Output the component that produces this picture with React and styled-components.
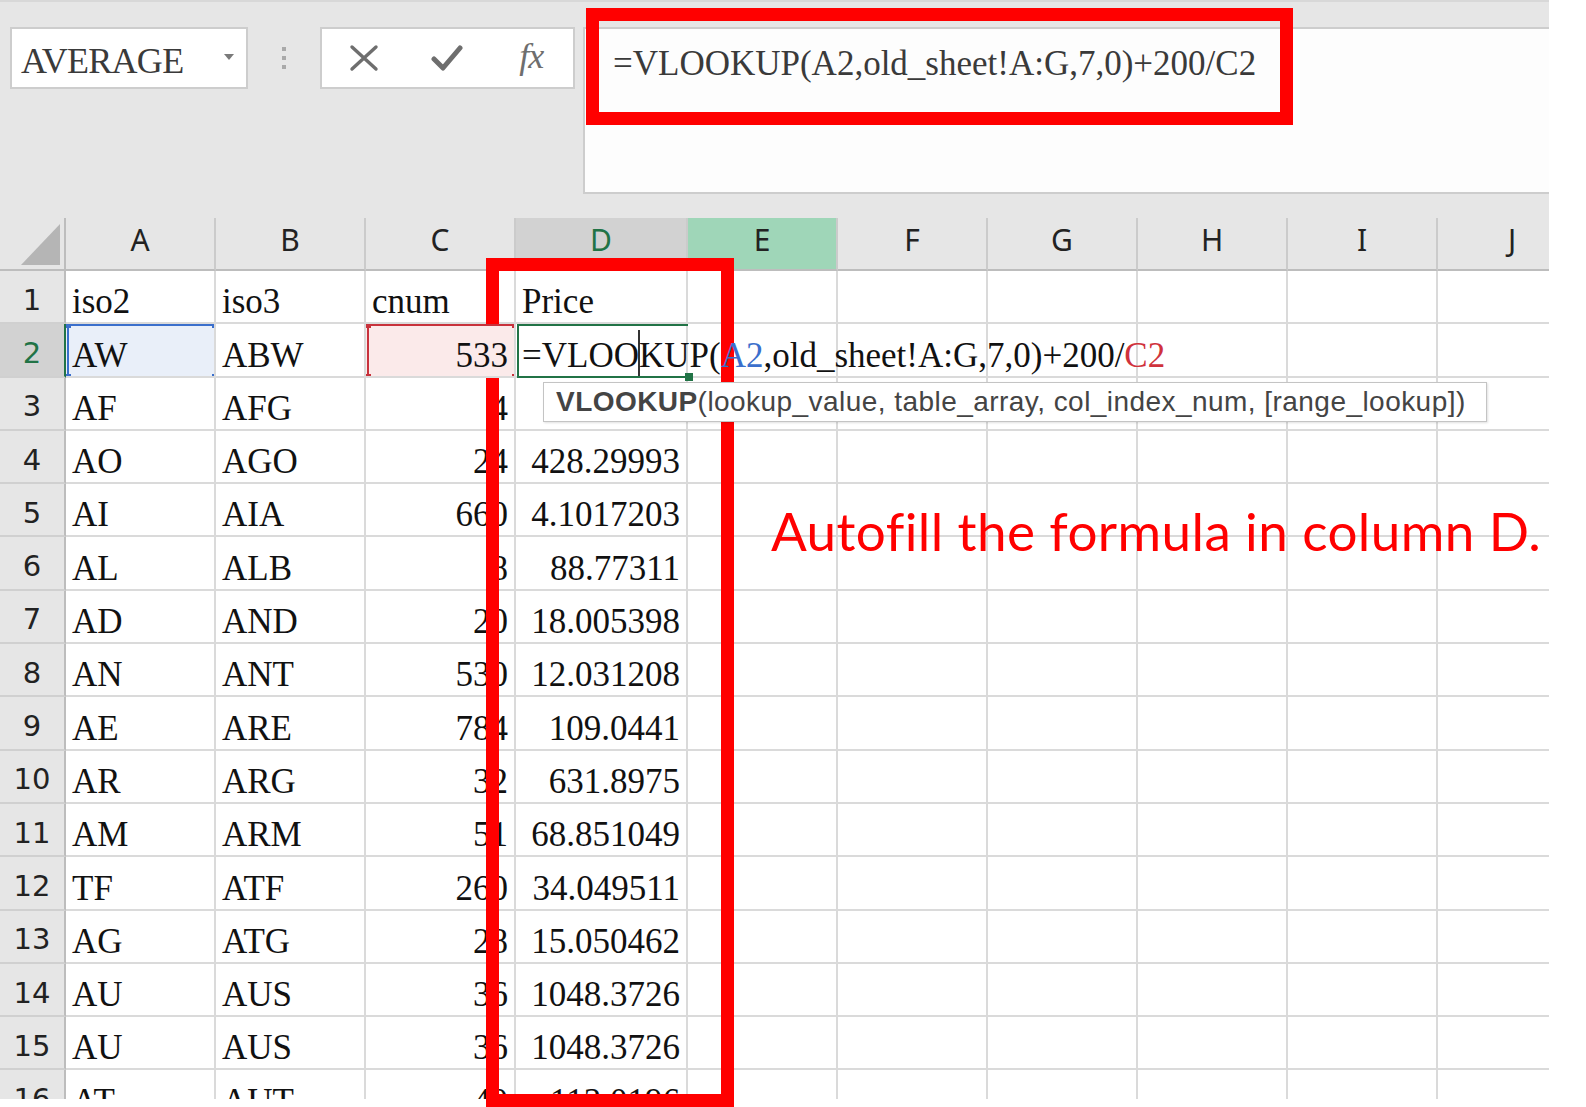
import React from "react";
import styled, { createGlobalStyle } from "styled-components";

const GlobalStyle = createGlobalStyle`
  html, body { margin: 0; padding: 0; background: #fff; }
  body { width: 1586px; height: 1107px; overflow: hidden; }
`;

const SERIF = `"Liberation Serif", "Times New Roman", serif`;

const Page = styled.div`
  position: relative;
  width: 1586px;
  height: 1107px;
  background: #fff;
  overflow: hidden;
`;

const Excel = styled.div`
  width: 1549px;
  height: 1099px;
  box-sizing: border-box;
  overflow: hidden;
  background: #e6e6e6;
  border-top: 2px solid #d8d8d8;
  display: flex;
  flex-direction: column;
`;

/* ---------- formula toolbar ---------- */
const TopBar = styled.div`
  display: flex;
  align-items: flex-start;
  padding: 25px 0 0 10px;
`;

const NameBox = styled.div`
  width: 238px;
  height: 62px;
  box-sizing: border-box;
  background: #fff;
  border: 2px solid #cdcdcd;
  display: flex;
  align-items: center;
  justify-content: space-between;
  padding: 6px 12px 0 9px;
  font-family: ${SERIF};
  font-size: 36px;
  letter-spacing: -0.7px;
  color: #3a3a3a;
`;

const DropArrow = styled.span`
  width: 0;
  height: 0;
  border-left: 5px solid transparent;
  border-right: 5px solid transparent;
  border-top: 6px solid #7a7a7a;
  margin-bottom: 8px;
`;

const Grip = styled.div`
  width: 72px;
  height: 62px;
  display: flex;
  flex-direction: column;
  align-items: center;
  justify-content: center;
  gap: 5px;
`;

const GripDot = styled.span`
  width: 4px;
  height: 4px;
  background: #a9a9a9;
`;

const FxBox = styled.div`
  width: 255px;
  height: 62px;
  box-sizing: border-box;
  background: #fff;
  border: 2px solid #cdcdcd;
  display: grid;
  grid-template-columns: repeat(3, 1fr);
  align-items: center;
  justify-items: center;
`;

const FxText = styled.span`
  font-family: ${SERIF};
  font-style: italic;
  font-size: 36px;
  color: #6e6e6e;
  letter-spacing: -1px;
  margin-top: -4px;
`;

const FormulaBar = styled.div`
  flex: 1;
  height: 167px;
  margin-left: 8px;
  box-sizing: border-box;
  background: #fdfdfd;
  border: 2px solid #cdcdcd;
  border-right: none;
  padding: 15px 0 0 28px;
  font-family: ${SERIF};
  font-size: 35px;
  line-height: 40px;
  color: #3a3a3a;
  white-space: nowrap;
`;

/* ---------- sheet grid ---------- */
const Sheet = styled.div`
  margin-top: 24px;
  display: grid;
  grid-template-columns: 66px 150px 150px 150px 172px 150px 150px 150px 150px 150px 150px;
  grid-template-rows: 53px;
  grid-auto-rows: 53.3px;
`;

const Corner = styled.div`
  border-right: 2px solid #bdbdbd;
  border-bottom: 2px solid #bdbdbd;
  display: flex;
  align-items: flex-end;
  justify-content: flex-end;
  padding: 0 4px 4px 0;
`;

const CornerTri = styled.span`
  width: 39px;
  height: 41px;
  background: #b5b5b5;
  clip-path: polygon(100% 0, 100% 100%, 0 100%);
`;

const ColHead = styled.div`
  box-sizing: border-box;
  background: ${(p) => (p.$state === "active" ? "#d2d2d2" : p.$state === "green" ? "#9fd6b8" : "#e6e6e6")};
  border-right: 2px solid #cbcbcb;
  border-bottom: 2px solid ${(p) => (p.$state === "active" ? "#217346" : "#bdbdbd")};
  display: flex;
  align-items: center;
  justify-content: center;
  padding-bottom: 8px;
  font-family: "Noto Sans", "Open Sans", sans-serif;
  font-size: 30px;
  color: ${(p) => (p.$state === "active" ? "#217346" : "#222")};
`;

const RowHead = styled.div`
  box-sizing: border-box;
  background: ${(p) => (p.$active ? "#d2d2d2" : "#e6e6e6")};
  border-right: 2px solid ${(p) => (p.$active ? "#217346" : "#bdbdbd")};
  border-bottom: 2px solid #d0d0d0;
  display: flex;
  align-items: center;
  justify-content: center;
  padding-top: 6px;
  font-family: "DejaVu Sans", sans-serif;
  font-size: 29px;
  color: ${(p) => (p.$active ? "#217346" : "#222")};
`;

const Cell = styled.div`
  position: ${(p) => (p.$z ? "relative" : "static")};
  z-index: ${(p) => p.$z || "auto"};
  box-sizing: border-box;
  min-width: 0;
  background: ${(p) => p.$bg || "#fff"};
  border-right: 2px solid #dadada;
  border-bottom: 2px solid #dadada;
  display: flex;
  align-items: flex-end;
  justify-content: ${(p) => (p.$right ? "flex-end" : "flex-start")};
  padding: 0 6px 0 6px;
  font-family: ${SERIF};
  font-size: 35px;
  line-height: 40px;
  color: #111;
  white-space: nowrap;
  overflow: ${(p) => (p.$overflow ? "visible" : "hidden")};
`;

const EditText = styled.span`
  display: block;
  white-space: nowrap;
  color: #111;
`;

const RefFrame = styled.div`
  position: absolute;
  left: 1px;
  top: 0;
  right: -2px;
  bottom: -2px;
  border: 2px solid ${(p) => p.$color};
  ${(p) => (p.$open ? "border-right: none;" : "")}
  pointer-events: none;
`;

const Handle = styled.span`
  position: absolute;
  width: ${(p) => p.$size || 7}px;
  height: ${(p) => p.$size || 7}px;
  background: ${(p) => p.$color};
  ${(p) => (p.$top ? "top: -5px;" : "bottom: -5px;")}
  ${(p) => (p.$left ? "left: -5px;" : "right: -5px;")}
`;

const RefA = styled.span`
  color: #3b6fcc;
`;

const RefC = styled.span`
  color: #d0323c;
`;

const Caret = styled.span`
  display: inline-block;
  width: 2px;
  height: 46px;
  background: #333;
  vertical-align: -9px;
  margin: 0 -1px;
`;

const Tooltip = styled.div`
  position: absolute;
  left: 27px;
  top: 58px;
  width: 944px;
  height: 40px;
  box-sizing: border-box;
  background: #fff;
  border: 1px solid #c4c4c4;
  box-shadow: 1px 1px 2px rgba(0, 0, 0, 0.12);
  padding-left: 12px;
  font-family: "Liberation Sans", Arial, sans-serif;
  font-size: 28px;
  letter-spacing: 0.45px;
  line-height: 37px;
  color: #444;
  white-space: nowrap;
`;

const Bold = styled.b`
  font-weight: 700;
`;

/* ---------- annotations ---------- */
const RedBox = styled.div`
  position: absolute;
  box-sizing: border-box;
  border: 13px solid #ff0000;
  pointer-events: none;
`;

const Note = styled.div`
  position: absolute;
  left: 771px;
  top: 504px;
  font-family: Lato, "Open Sans", sans-serif;
  font-size: 53px;
  line-height: 53px;
  color: #ff0000;
  white-space: nowrap;
  letter-spacing: 0.4px;
`;

const COLS = ["A", "B", "C", "D", "E", "F", "G", "H", "I", "J"];

const ROWS = [
  ["AF", "AFG", "4", ""],
  ["AO", "AGO", "24", "428.29993"],
  ["AI", "AIA", "660", "4.1017203"],
  ["AL", "ALB", "8", "88.77311"],
  ["AD", "AND", "20", "18.005398"],
  ["AN", "ANT", "530", "12.031208"],
  ["AE", "ARE", "784", "109.0441"],
  ["AR", "ARG", "32", "631.8975"],
  ["AM", "ARM", "51", "68.851049"],
  ["TF", "ATF", "260", "34.049511"],
  ["AG", "ATG", "28", "15.050462"],
  ["AU", "AUS", "36", "1048.3726"],
  ["AU", "AUS", "36", "1048.3726"],
  ["AT", "AUT", "40", "113.0196"],
];

function Blanks({ from }) {
  return COLS.slice(from).map((c) => <Cell key={c} />);
}

function Frame({ color, open }) {
  return (
    <RefFrame $color={color} $open={open}>
      {!open && <Handle $color={color} $top $left />}
      {!open && <Handle $color={color} $top />}
      {!open && <Handle $color={color} $left />}
      <Handle $color={color} $size={open ? 8 : 7} />
    </RefFrame>
  );
}

const CrossIcon = () => (
  <svg width="30" height="28" viewBox="0 0 30 28">
    <path d="M3 3 L27 25 M27 3 L3 25" stroke="#6e6e6e" strokeWidth="3.4" strokeLinecap="round" fill="none" />
  </svg>
);

const CheckIcon = () => (
  <svg width="32" height="28" viewBox="0 0 32 28">
    <path d="M3 15 L12 24 L29 4" stroke="#6e6e6e" strokeWidth="5" strokeLinecap="round" strokeLinejoin="round" fill="none" />
  </svg>
);

export default function App() {
  return (
    <Page>
      <GlobalStyle />
      <Excel>
        <TopBar>
          <NameBox>
            AVERAGE
            <DropArrow />
          </NameBox>
          <Grip>
            <GripDot />
            <GripDot />
            <GripDot />
          </Grip>
          <FxBox>
            <CrossIcon />
            <CheckIcon />
            <FxText>fx</FxText>
          </FxBox>
          <FormulaBar>=VLOOKUP(A2,old_sheet!A:G,7,0)+200/C2</FormulaBar>
        </TopBar>

        <Sheet>
          <Corner>
            <CornerTri />
          </Corner>
          {COLS.map((c) => (
            <ColHead key={c} $state={c === "D" ? "active" : c === "E" ? "green" : undefined}>
              {c}
            </ColHead>
          ))}

          <RowHead>1</RowHead>
          <Cell>iso2</Cell>
          <Cell>iso3</Cell>
          <Cell>cnum</Cell>
          <Cell>Price</Cell>
          <Blanks from={4} />

          <RowHead $active>2</RowHead>
          <Cell $bg="#e9eff9" $z={2}>
            AW
            <Frame color="#3b6fcc" />
          </Cell>
          <Cell>ABW</Cell>
          <Cell $bg="#fbeaea" $right $z={2}>
            533
            <Frame color="#c8323c" />
          </Cell>
          <Cell $overflow $z={1}>
            <EditText>
              =VLOO<Caret />KUP(<RefA>A2</RefA>,old_sheet!A:G,7,0)+200/<RefC>C2</RefC>
            </EditText>
            <Frame color="#217346" open />
            <Tooltip>
              <Bold>VLOOKUP</Bold>(lookup_value, table_array, col_index_num, [range_lookup])
            </Tooltip>
          </Cell>
          <Blanks from={4} />

          {ROWS.map((r, i) => (
            <React.Fragment key={i}>
              <RowHead>{i + 3}</RowHead>
              <Cell>{r[0]}</Cell>
              <Cell>{r[1]}</Cell>
              <Cell $right>{r[2]}</Cell>
              <Cell $right>{r[3]}</Cell>
              <Blanks from={4} />
            </React.Fragment>
          ))}
        </Sheet>
      </Excel>

      <RedBox style={{ left: 586, top: 8, width: 707, height: 117 }} />
      <RedBox style={{ left: 486, top: 258, width: 248, height: 849 }} />
      <Note>Autofill the formula in column D.</Note>
    </Page>
  );
}
